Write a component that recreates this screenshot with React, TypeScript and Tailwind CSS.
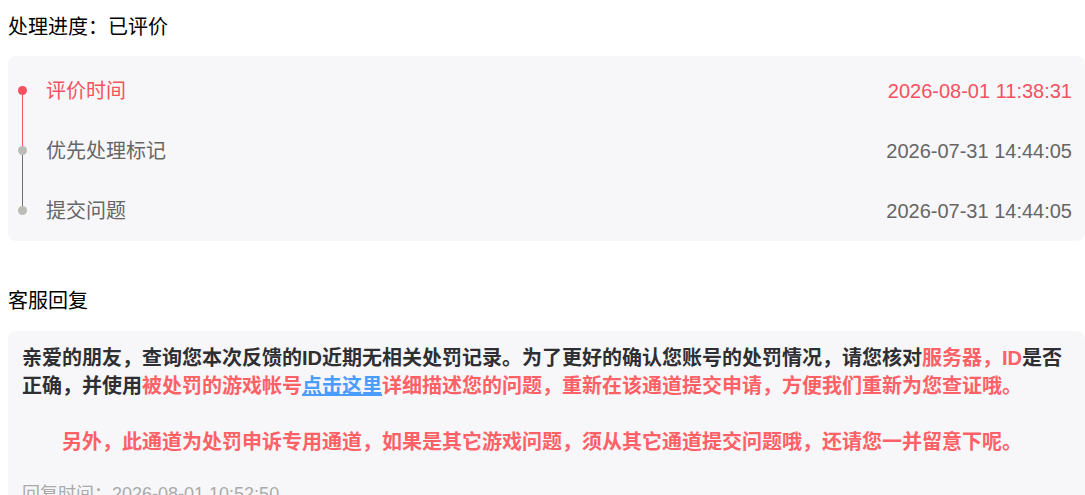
import React from "react";

const rows = [
  { label: "评价时间", time: "2026-08-01 11:38:31", active: true },
  { label: "优先处理标记", time: "2026-07-31 14:44:05", active: false },
  { label: "提交问题", time: "2026-07-31 14:44:05", active: false },
];

export default function App() {
  const font = { fontFamily: '"Liberation Sans", Arial, "Noto Sans CJK SC", sans-serif' };
  return (
    <div className="min-h-[495px] w-[1085px] overflow-hidden bg-white pl-2" style={font}>
      <div className="pt-[13px] text-[20px] leading-[28px] text-black">处理进度：已评价</div>
      <div className="mt-[15px] rounded-lg bg-[#f7f7f9] pt-[5px]">
        {rows.map((r, i) => (
          <div key={i} className="flex h-[60px] items-center pr-[13px]">
            <div className="flex h-full w-[38px] shrink-0 pl-[10px]">
              <div className="flex h-full w-[9px] shrink-0 flex-col items-center">
                <div
                  className={
                    "h-[25px] w-px shrink-0 " +
                    (i === 0 ? "bg-transparent" : i === 1 ? "bg-[#f5515f]" : "bg-[#707070]")
                  }
                />
                <div
                  className={
                    "h-[9px] w-[9px] shrink-0 rounded-full " + (r.active ? "bg-[#f5515f]" : "bg-[#bcbcb6]")
                  }
                />
                <div
                  className={
                    "h-[26px] w-px shrink-0 " +
                    (i === 0 ? "bg-[#f5515f]" : i === 1 ? "bg-[#707070]" : "bg-transparent")
                  }
                />
              </div>
            </div>
            <div
              className={
                "flex-1 text-[20px] leading-[28px] " + (r.active ? "text-[#f5515f]" : "text-[#666666]")
              }
            >
              {r.label}
            </div>
            <div
              className={"text-[20px] leading-[28px] " + (r.active ? "text-[#f5515f]" : "text-[#666666]")}
            >
              {r.time}
            </div>
          </div>
        ))}
      </div>

      <div className="mt-[46px] text-[20px] leading-[28px] text-black">客服回复</div>
      <div className="mt-[16px] rounded-lg bg-[#f7f7f9] pl-[14px] pr-[14px] pt-[13px] pb-6">
        <p className="text-[20px] font-bold leading-[28px] text-[#2e2e33]">
          亲爱的朋友，查询您本次反馈的ID近期无相关处罚记录。为了更好的确认您账号的处罚情况，请您核对
          <span className="text-[#ff6166]">服务器，ID</span>是否正确，并使用
          <span className="text-[#ff6166]">被处罚的游戏帐号</span>
          <a className="text-[#4a9cff] underline decoration-[#4a9cff]">点击这里</a>
          <span className="text-[#ff6166]">详细描述您的问题，重新在该通道提交申请，方便我们重新为您查证哦。</span>
        </p>
        <div className="h-[28px]" />
        <p className="indent-[40px] text-[20px] font-bold leading-[28px] text-[#ff6166]">
          另外，此通道为处罚申诉专用通道，如果是其它游戏问题，须从其它通道提交问题哦，还请您一并留意下呢。
        </p>
        <p className="mt-[24px] text-[18px] leading-[28px] text-[#aaaaaa]">回复时间：2026-08-01 10:52:50</p>
      </div>
    </div>
  );
}
